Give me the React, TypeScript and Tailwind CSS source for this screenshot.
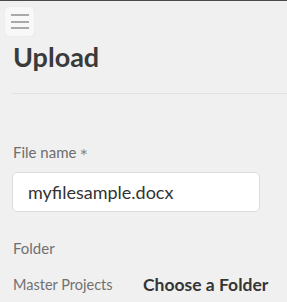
export default function App() {
  return (
    <div
      className="h-[302px] w-[287px] overflow-hidden border-t border-[#4a4a4a] bg-[#f0f0f0] text-[#333]"
      style={{ fontFamily: "Lato, 'Open Sans', sans-serif" }}
    >
      <div className="pl-[5px] pt-[6px]">
        <button className="flex h-[29px] w-[29px] flex-col items-center justify-center gap-[4.5px] rounded-[4px] bg-[#f8f8f8] shadow-[0_0_1px_rgba(0,0,0,0.15)]">
          <span className="block h-[2px] w-[18px] bg-[#a9a9a9]" />
          <span className="block h-[2px] w-[18px] bg-[#a9a9a9]" />
          <span className="block h-[2px] w-[18px] bg-[#a9a9a9]" />
        </button>
      </div>

      <h1 className="ml-[13px] mt-[4px] text-[27px] font-bold leading-[34px] text-[#3a3a3a]">Upload</h1>

      <div className="ml-[12px] mt-[19px] h-px bg-[#e2e2e2]" />

      <div className="px-[12px]">
        <label className="mt-[48px] block pl-px text-[15px] leading-[20px] text-[#6e6e6e]">
          File name
          <span className="ml-[3px] inline-block align-[-5px] text-[20px] leading-none text-[#8a8a8a]">*</span>
        </label>
        <div className="mt-[7px] flex h-[40px] w-[248px] items-center rounded-[5px] border border-[#dcdcdc] bg-white pl-[15px] text-[18px] text-[#333]">
          myfilesample.docx
        </div>

        <div className="mt-[26px] pl-px text-[15px] leading-[20px] text-[#707070]">Folder</div>

        <div className="mt-[16px] flex items-center pl-px">
          <span className="w-[130px] text-[14.5px] leading-[22px] text-[#707070]">Master Projects</span>
          <span className="text-[17.5px] font-bold leading-[22px] text-[#353535]">Choose a Folder</span>
        </div>
      </div>
    </div>
  );
}
